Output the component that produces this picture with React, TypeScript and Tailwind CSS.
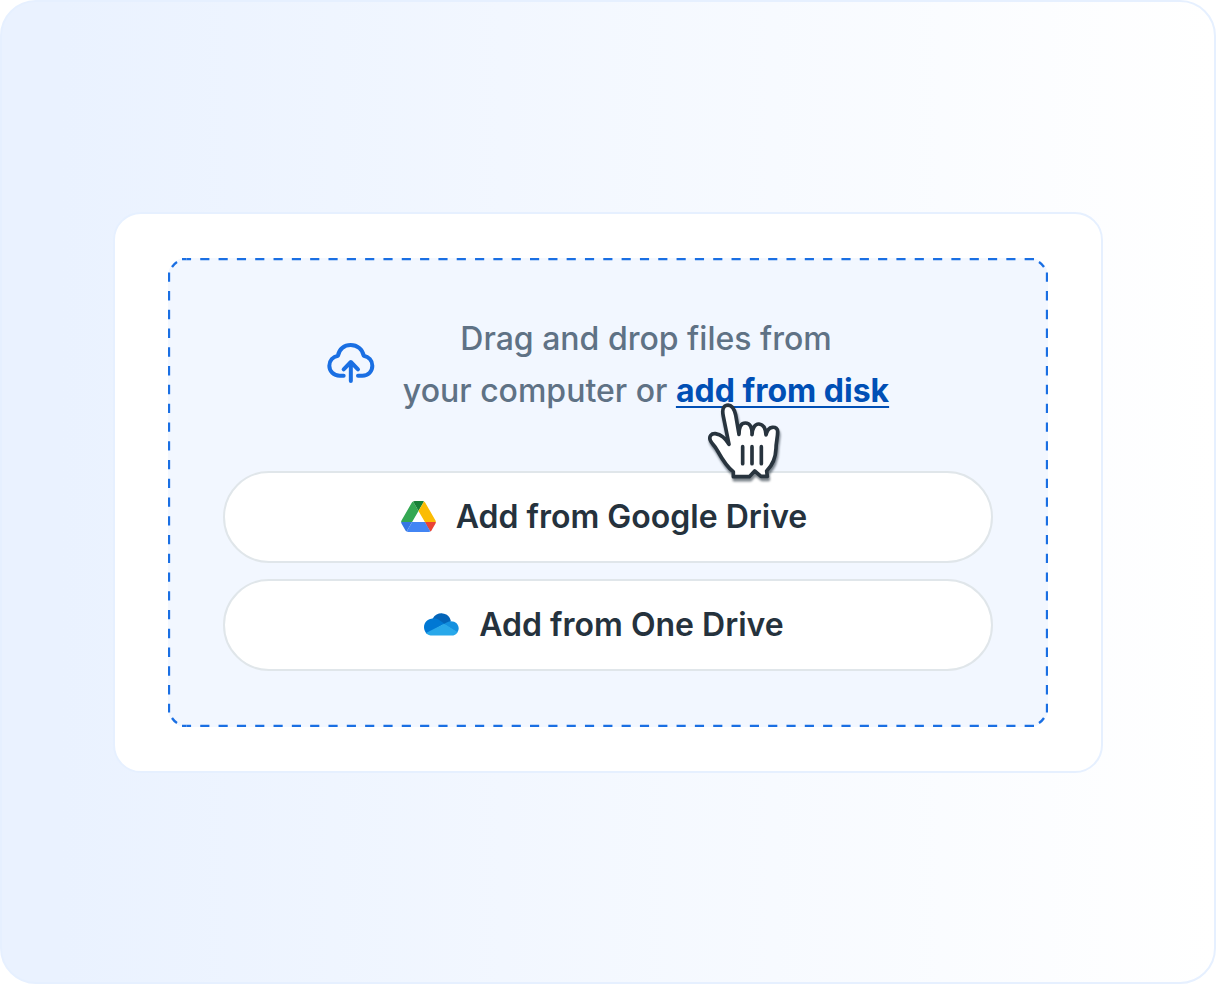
import React from "react";

function CloudUploadIcon() {
  return (
    <svg
      viewBox="36 36 144 126"
      className="mb-1 h-[42px] w-12 shrink-0"
      fill="none"
      stroke="#1a6fe3"
      strokeWidth="12"
      strokeLinecap="round"
      strokeLinejoin="round"
      aria-hidden="true"
    >
      <path d="M86 137H74C56 137 43 124 43 107C43 92 54 80 69 77C72 57 88 45 107 45C127 45 143 58 146 77C161 80 172 92 172 107C172 124 160 137 142 137H129" />
      <path d="M107.500 153V97M86 118L107.500 96L129 118" />
    </svg>
  );
}

function GoogleDriveIcon() {
  return (
    <svg viewBox="0 0 87.3 78" className="h-[31px] w-[35px] shrink-0" aria-hidden="true">
      <path fill="#3777e3" d="M6.600 66.850l3.850 6.650c.8 1.400 1.950 2.500 3.300 3.300l13.750-23.800H0c0 1.550.4 3.100 1.200 4.500z" />
      <path fill="#34a853" d="M43.650 25L29.900 1.200c-1.350.8-2.500 1.900-3.300 3.300l-25.400 44A9.060 9.060 0 0 0 0 53h27.500z" />
      <path fill="#ea4335" d="M73.550 76.800c1.350-.8 2.500-1.900 3.300-3.300l1.600-2.750 7.650-13.250c.8-1.400 1.200-2.950 1.200-4.500H59.800l5.850 11.500z" />
      <path fill="#188038" d="M43.650 25L57.400 1.200C56.050.4 54.500 0 52.900 0H34.400c-1.600 0-3.150.45-4.500 1.200z" />
      <path fill="#4285f4" d="M59.800 53H27.500L13.750 76.800c1.350.8 2.900 1.200 4.500 1.200h50.800c1.600 0 3.150-.45 4.500-1.200z" />
      <path fill="#fbbc04" d="M73.400 26.500l-12.700-22c-.8-1.400-1.950-2.500-3.300-3.300L43.650 25 59.800 53h27.450c0-1.550-.4-3.100-1.200-4.500z" />
    </svg>
  );
}

function OneDriveIcon() {
  return (
    <svg viewBox="35 42 104 68" className="h-[23px] w-[35px] shrink-0" aria-hidden="true">
      <path fill="#0364b8" d="M61 58C68 46 79 42 90 43C103 44 112 52 115 66L96 78L60 62Z" />
      <path fill="#0078d4" d="M61 58C75 56 83 66 96 74L44 104C38 98 35 91 35 84C35 69 47 58 61 58Z" />
      <path fill="#1490df" d="M94 75C101 70 107 66 115 66C129 66 138 75 138 88C138 92 136 97 133 100Z" />
      <path fill="#28a8ea" d="M95 74L135 99C131 106 124 109 117 109H60C52 109 46 106 41 101Z" />
    </svg>
  );
}

function HandCursor() {
  return (
    <svg
      viewBox="0 0 300 285"
      className="pointer-events-none absolute top-[30px] left-4 z-10 h-[95px] w-[100px] drop-shadow-[1px_3px_1px_rgba(37,50,61,0.6)]"
      fill="none"
      stroke="#28343e"
      strokeWidth="11"
      strokeLinecap="round"
      strokeLinejoin="round"
      aria-hidden="true"
    >
      <path
        fill="#fff"
        d="M111 148L94 64C90 46 92 34 104 31C118 28 127 43 131 60L141 118C141 96 148 84 160 84C174 84 181 98 180 119C181 99 189 86 201 87C214 88 221 102 222 120C225 105 232 98 241 97C251 96 257 101 257 110C257 128 252 142 252 160C251 187 240 212 224 228L226 244H207L188 228L172 245H124V230C103 216 88 188 74 163C68 152 59 146 55 136C50 124 58 115 70 116C87 119 102 132 111 148Z"
      />
      <path d="M152 155V206M180 155V206M208 155V206" />
    </svg>
  );
}

function DashedOutline() {
  return (
    <svg
      viewBox="0 0 880 469"
      preserveAspectRatio="none"
      className="pointer-events-none absolute inset-0 h-full w-full"
      fill="none"
      stroke="#1a6fe3"
      strokeWidth="2.3"
      aria-hidden="true"
    >
      <path strokeDasharray="9.16 9.16" strokeDashoffset="4.58" d="M18.500 1H861M18.500 468H861" />
      <path strokeDasharray="9.38 9.38" strokeDashoffset="4.690" d="M1 19V450M879 19V450" />
      <path d="M18.500 1H14M861 1H866M18.500 468H14M861 468H866M1 19V14.500M879 19V14.500M1 450V454.500M879 450V454.500" />
      <path d="M4 9Q6 6 9 4M876 9Q874 6 871 4M4 460Q6 463 9 465M876 460Q874 463 871 465" />
    </svg>
  );
}

function SourceButton({ icon, label }: { icon: React.ReactNode; label: string }) {
  return (
    <button
      type="button"
      className="flex h-[92px] w-full cursor-pointer items-center justify-center gap-5 rounded-full border-2 border-[#e0e6ea] bg-white pr-2 text-[32px] leading-[52px] font-semibold text-[#25323d]"
    >
      {icon}
      <span>{label}</span>
    </button>
  );
}

export default function App() {
  return (
    <main className="flex min-h-screen items-center justify-center rounded-[36px] border-2 border-[#e6f0ff] bg-[linear-gradient(to_right,#eaf2ff_5%,#ffffff)] px-[111px] py-12 font-['Inter',sans-serif]">
      <section className="w-full max-w-[990px] rounded-[28px] border-2 border-[#e6f0ff] bg-white px-[53px] py-11">
        <div className="relative rounded-[18px] bg-[#f2f7ff] px-[55px] pt-[55px] pb-14">
          <DashedOutline />
          <div className="mb-[54px] flex items-center justify-center gap-7">
            <CloudUploadIcon />
            <p className="text-center text-[32px] leading-[52px] font-medium text-[#5f7285]">
              Drag and drop files from
              <br />
              your computer or{" "}
              <span className="relative inline-block">
                <a
                  href="#disk"
                  className="font-bold text-[#004fb5] underline decoration-2 underline-offset-4 [text-decoration-skip-ink:none]"
                >
                  add from disk
                </a>
                <HandCursor />
              </span>
            </p>
          </div>
          <div className="flex flex-col gap-4">
            <SourceButton icon={<GoogleDriveIcon />} label="Add from Google Drive" />
            <SourceButton icon={<OneDriveIcon />} label="Add from One Drive" />
          </div>
        </div>
      </section>
    </main>
  );
}
